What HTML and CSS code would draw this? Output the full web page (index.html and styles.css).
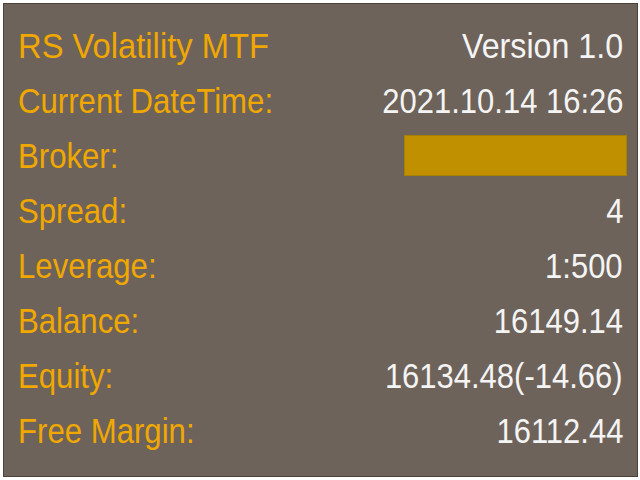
FILE: index.html
```html
<!DOCTYPE html>
<html>
<head>
<meta charset="utf-8">
<link rel="stylesheet" href="styles.css">
</head>
<body>
<div class="panel">
  <div class="row row-title"><span class="label">RS Volatility MTF</span><span class="value">Version 1.0</span></div>
  <div class="row"><span class="label">Current DateTime:</span><span class="value">2021.10.14 16:26</span></div>
  <div class="row"><span class="label">Broker:</span><span class="broker-bar"></span></div>
  <div class="row"><span class="label">Spread:</span><span class="value">4</span></div>
  <div class="row"><span class="label">Leverage:</span><span class="value">1:500</span></div>
  <div class="row"><span class="label">Balance:</span><span class="value">16149.14</span></div>
  <div class="row"><span class="label">Equity:</span><span class="value">16134.48(-14.66)</span></div>
  <div class="row"><span class="label">Free Margin:</span><span class="value">16112.44</span></div>
</div>
</body>
</html>
```

FILE: styles.css
```css
html, body {
  margin: 0;
  padding: 0;
  background: #ffffff;
  width: 640px;
  height: 480px;
  overflow: hidden;
}
.panel {
  box-sizing: border-box;
  margin: 3px 0 0 3px;
  width: 635px;
  height: 474px;
  background: #6e635a;
  border: 1px solid #4a423b;
  padding: 14px 14px 0 14px;
  display: flex;
  flex-direction: column;
  font-family: "Liberation Sans", Arial, sans-serif;
  font-size: 35px;
}
.row {
  height: 55px;
  line-height: 55px;
  display: flex;
  justify-content: space-between;
  align-items: center;
}
.label {
  color: #f0a800;
  display: inline-block;
  transform: scaleX(0.89);
  transform-origin: left center;
}
.value {
  color: #f4f4f4;
  display: inline-block;
  transform: scaleX(0.885);
  transform-origin: right center;
}
.row-title .label {
  transform: scaleX(0.935);
}
.row-title .value {
  transform: scaleX(0.92);
}
.broker-bar {
  width: 223px;
  height: 41px;
  margin-right: -4px;
  background: #c09000;
  box-shadow: inset 0 0 0 1px #a88000;
}
```
